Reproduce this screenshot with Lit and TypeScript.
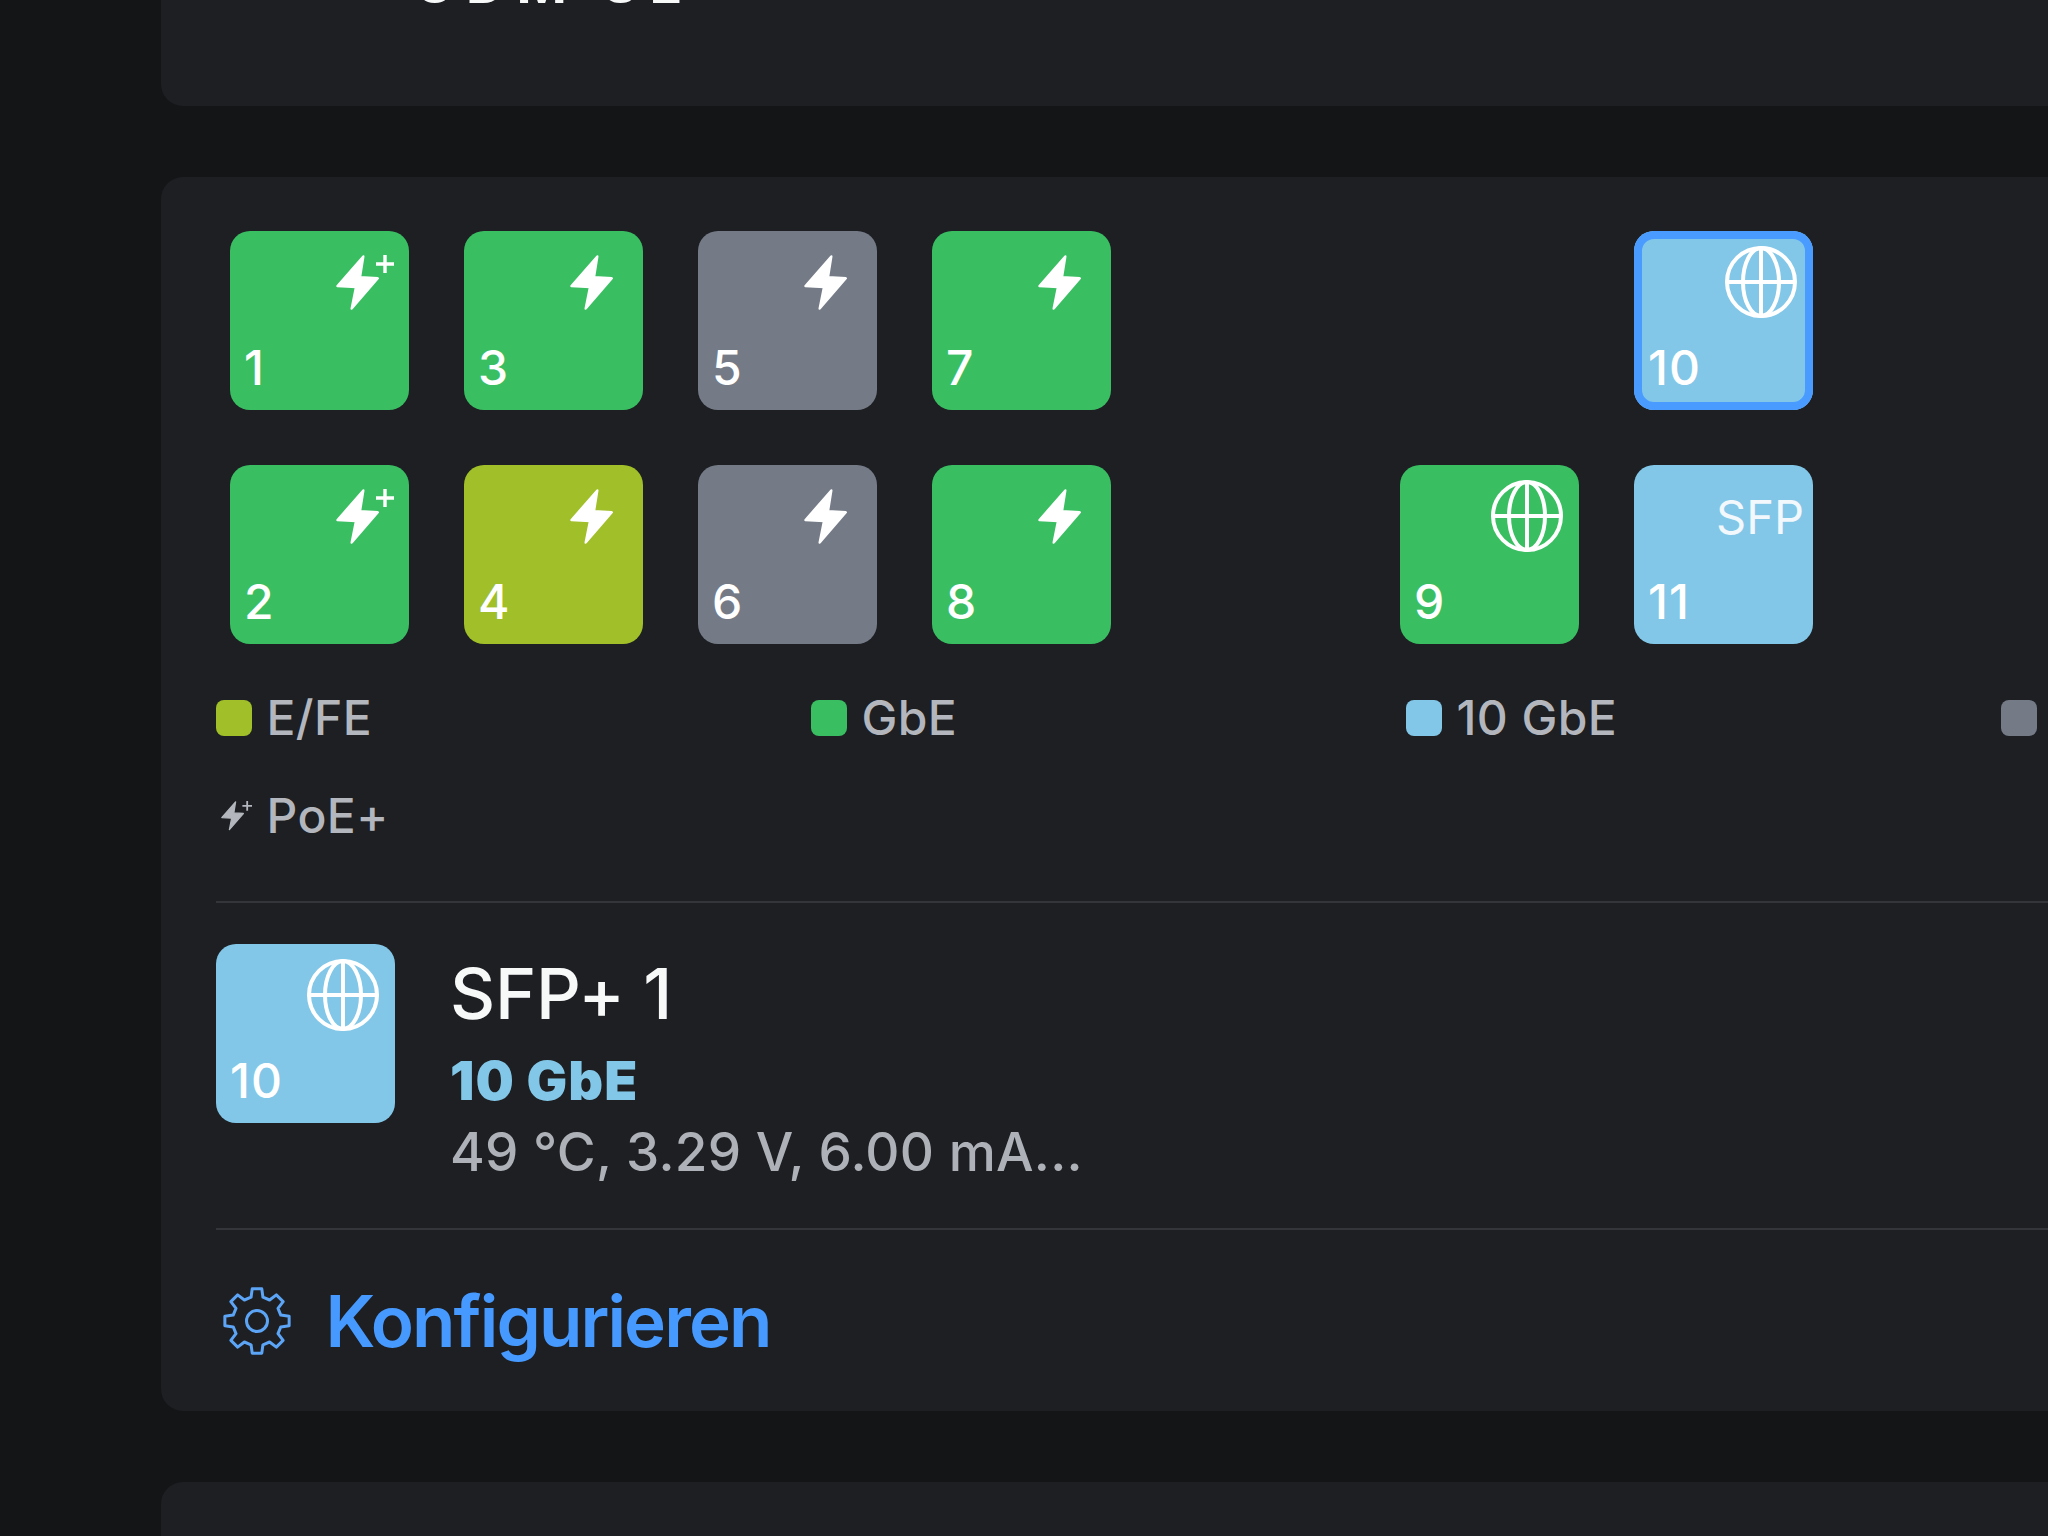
import { css, html, svg, LitElement } from 'lit';
import { customElement } from 'lit/decorators.js';
import { classMap } from 'lit/directives/class-map.js';

type Speed = 'gbe' | 'fe' | 'off' | 'ten';
type Glyph = 'poe' | 'poeplus' | 'globe' | 'sfp';

interface Port {
  label: string;
  speed: Speed;
  glyph: Glyph;
  selected?: boolean;
}

const TOP_ROW: (Port | null)[] = [
  { label: '1', speed: 'gbe', glyph: 'poeplus' },
  { label: '3', speed: 'gbe', glyph: 'poe' },
  { label: '5', speed: 'off', glyph: 'poe' },
  { label: '7', speed: 'gbe', glyph: 'poe' },
  null,
  null,
  { label: '10', speed: 'ten', glyph: 'globe', selected: true },
];

const BOTTOM_ROW: (Port | null)[] = [
  { label: '2', speed: 'gbe', glyph: 'poeplus' },
  { label: '4', speed: 'fe', glyph: 'poe' },
  { label: '6', speed: 'off', glyph: 'poe' },
  { label: '8', speed: 'gbe', glyph: 'poe' },
  null,
  { label: '9', speed: 'gbe', glyph: 'globe' },
  { label: '11', speed: 'ten', glyph: 'sfp' },
];

const LEGEND: { text: string; speed: Speed }[] = [
  { text: 'E/FE', speed: 'fe' },
  { text: 'GbE', speed: 'gbe' },
  { text: '10 GbE', speed: 'ten' },
  { text: 'Inaktiv', speed: 'off' },
];

// outline of an 8 tooth gear, centered on 34/34
function gearPath(): string {
  const pt = (r: number, deg: number) => {
    const a = ((deg - 90) * Math.PI) / 180;
    return `${(34 + r * Math.cos(a)).toFixed(2)} ${(34 + r * Math.sin(a)).toFixed(2)}`;
  };
  const parts: string[] = [];
  for (let i = 0; i < 8; i++) {
    const c = i * 45;
    parts.push(`${i === 0 ? 'M' : 'L'}${pt(24.5, c - 14)}`);
    parts.push(`L${pt(32.5, c - 8.5)}`);
    parts.push(`L${pt(32.5, c + 8.5)}`);
    parts.push(`L${pt(24.5, c + 14)}`);
  }
  return parts.join(' ') + ' Z';
}

const bolt = svg`<path d="M27.3 1.5 L1.5 31 L20 32 L15.7 53.5 L41.8 23.3 L24 22.3 Z" fill="currentColor" stroke="currentColor" stroke-width="2.4" stroke-linejoin="round"/>`;
const plus = svg`<path d="M49 0v18M40 9h18" fill="none" stroke="currentColor" stroke-width="3.4"/>`;

@customElement('app-root')
export class AppRoot extends LitElement {
  private renderGlyph(glyph: Glyph) {
    if (glyph === 'sfp') return html`<span class="sfp">SFP</span>`;
    if (glyph === 'globe') {
      return html`<svg class="globe" viewBox="0 0 72 72" fill="none" stroke="currentColor" stroke-width="4">
        <circle cx="36" cy="36" r="34"/>
        <ellipse cx="36" cy="36" rx="18" ry="34"/>
        <path d="M36 2v68M2 36h68"/>
      </svg>`;
    }
    return html`<svg class="bolt" viewBox="0 0 58 56">${bolt}${glyph === 'poeplus' ? plus : ''}</svg>`;
  }

  private renderPort(port: Port | null) {
    if (!port) return html`<div></div>`;
    return html`
      <div class=${classMap({ port: true, [port.speed]: true, selected: !!port.selected })}>
        ${this.renderGlyph(port.glyph)}
        <span class="num">${port.label}</span>
      </div>
    `;
  }

  public render() {
    return html`
      <div class="page">
        <section class="card device">
          <div class="device-name">UDM SE</div>
        </section>

        <section class="card">
          <div class="ports">
            ${TOP_ROW.map((p) => this.renderPort(p))}
            ${BOTTOM_ROW.map((p) => this.renderPort(p))}
          </div>

          <div class="legend">
            ${LEGEND.map(
              (l) => html`
                <div class="legend-item">
                  <span class="swatch ${l.speed}"></span>
                  <span>${l.text}</span>
                </div>
              `
            )}
            <div class="legend-item">
              <svg class="swatch mini" viewBox="0 0 58 56">${bolt}${plus}</svg>
              <span>PoE+</span>
            </div>
          </div>

          <div class="detail">
            ${this.renderPort({ label: '10', speed: 'ten', glyph: 'globe' })}
            <div class="detail-text">
              <div class="title">SFP+ 1</div>
              <div class="speed">10 GbE</div>
              <div class="info">49 °C, 3.29 V, 6.00 mA...</div>
            </div>
          </div>

          <div class="configure">
            <svg class="gear" viewBox="0 0 68 68" fill="none" stroke="currentColor" stroke-width="3" stroke-linejoin="round">
              <path d=${gearPath()}/>
              <circle cx="34" cy="34" r="10.5"/>
            </svg>
            <span>Konfigurieren</span>
          </div>
        </section>

        <section class="card next"></section>
      </div>
    `;
  }

  public static styles = css`
    :host {
      display: block;
      width: 2048px;
      height: 1536px;
      overflow: hidden;
      background: #141517;
      font-family: Inter, "Liberation Sans", sans-serif;
    }
    .page {
      display: flex;
      flex-direction: column;
      gap: 70.5px;
      padding-left: 161px;
    }
    .card {
      box-sizing: border-box;
      width: 2488px;
      padding: 54px 54.5px 0;
      border-radius: 22px;
      background: #1d1f23;
    }
    .device {
      display: flex;
      align-items: flex-end;
      height: 300px;
      margin-top: -194px;
      padding: 0 0 103px 254px;
    }
    .device-name {
      font-size: 54px;
      font-weight: 700;
      line-height: 39px;
      letter-spacing: 11.5px;
      color: #f7f8f8;
    }
    .next {
      height: 300px;
    }
    .ports {
      display: grid;
      grid-template-columns: repeat(7, 179.5px);
      gap: 54.5px;
      padding-left: 14px;
    }
    .port {
      box-sizing: border-box;
      display: flex;
      flex-direction: column;
      justify-content: space-between;
      width: 179.5px;
      height: 179.5px;
      border-radius: 20px;
      color: #fff;
    }
    .gbe {
      background: #39bf62;
    }
    .fe {
      background: #a0bf28;
    }
    .off {
      background: #747b87;
    }
    .ten {
      background: #82c7e8;
    }
    .selected {
      box-shadow: inset 0 0 0 8px #4a9bff;
    }
    .num {
      margin: 0 0 25px 14.5px;
      font-size: 48px;
      font-weight: 550;
      line-height: 34px;
      letter-spacing: 1px;
    }
    .bolt {
      align-self: flex-end;
      width: 58px;
      height: 56px;
      margin: 24.5px 15.5px 0 0;
    }
    .globe {
      align-self: flex-end;
      width: 72px;
      height: 72px;
      margin: 15.5px 16px 0 0;
    }
    .sfp {
      align-self: flex-end;
      margin: 35px 9px 0 0;
      font-size: 47px;
      line-height: 34px;
      color: #f2f8fb;
    }
    .legend {
      display: grid;
      grid-template-columns: repeat(4, 595px);
      row-gap: 62px;
      margin-top: 55.5px;
      padding-bottom: 67px;
      border-bottom: 2px solid #33353a;
    }
    .legend-item {
      display: flex;
      align-items: center;
      gap: 15px;
      font-size: 48px;
      font-weight: 500;
      line-height: 36px;
      letter-spacing: 0.4px;
      color: #b3b7bd;
    }
    .swatch {
      width: 36px;
      height: 36px;
      border-radius: 8px;
    }
    .mini {
      box-sizing: border-box;
      padding: 3px 0 3px 5px;
      border-radius: 0;
      color: #b3b7bd;
    }
    .detail {
      display: flex;
      gap: 55px;
      padding: 41px 0 56.5px;
      border-bottom: 2px solid #33353a;
    }
    .detail-text {
      padding-top: 24px;
    }
    .title {
      font-size: 70px;
      font-weight: 500;
      line-height: 51px;
      letter-spacing: -0.2px;
      color: #f7f8f8;
    }
    .speed {
      margin-top: 43px;
      font-size: 54px;
      font-weight: 900;
      line-height: 38px;
      letter-spacing: 1px;
      color: #82c7e8;
    }
    .info {
      margin-top: 33px;
      font-size: 53px;
      font-weight: 500;
      line-height: 39px;
      letter-spacing: 0.25px;
      color: #aeb2b8;
    }
    .configure {
      display: flex;
      align-items: center;
      gap: 35px;
      height: 181px;
      padding-left: 7px;
      font-size: 71px;
      font-weight: 600;
      letter-spacing: -1.9px;
      color: #4599ff;
    }
    .gear {
      width: 68px;
      height: 68px;
      margin-top: 1px;
      color: #5ca4f5;
    }
  `;
}
